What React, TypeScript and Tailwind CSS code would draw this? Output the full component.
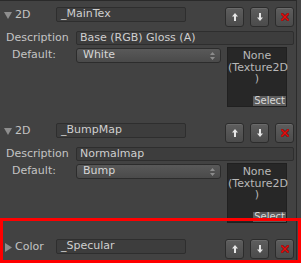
import React from 'react';

type Prop = {
  kind: string;
  name: string;
  expanded: boolean;
  description?: string;
  defaultValue?: string;
};

const props: Prop[] = [
  { kind: '2D', name: '_MainTex', expanded: true, description: 'Base (RGB) Gloss (A)', defaultValue: 'White' },
  { kind: '2D', name: '_BumpMap', expanded: true, description: 'Normalmap', defaultValue: 'Bump' },
  { kind: 'Color', name: '_Specular', expanded: false },
];

function ArrowIcon({ down }: { down?: boolean }) {
  return (
    <svg width="6" height="8" viewBox="0 0 6 8" className={down ? 'rotate-180' : ''}>
      <path d="M3 0 L6 3.5 L4 3.5 L4 8 L2 8 L2 3.5 L0 3.5 Z" fill="#e6e6e6" />
    </svg>
  );
}

function CrossIcon() {
  return (
    <svg width="8" height="8" viewBox="0 0 8 8">
      <path d="M1 1 L7 7 M7 1 L1 7" stroke="#5a1010" strokeWidth="2.6" strokeLinecap="square" />
      <path d="M1 1 L7 7 M7 1 L1 7" stroke="#e01010" strokeWidth="1.6" strokeLinecap="square" />
    </svg>
  );
}

function Foldout({ open }: { open: boolean }) {
  return (
    <svg width="9" height="9" viewBox="0 0 9 9" className="mr-[2px] shrink-0">
      {open ? <path d="M0 1 L8 1 L4 8 Z" fill="#8e8e8e" /> : <path d="M1 0 L8 4.5 L1 9 Z" fill="#8e8e8e" />}
    </svg>
  );
}

function SmallButton({ children }: { children: React.ReactNode }) {
  return (
    <button className="flex h-[20px] w-[19px] items-center justify-center rounded-[3px] border border-[#2c2c2c] bg-gradient-to-b from-[#5e5e5e] to-[#4b4b4b] shadow-[inset_0_1px_0_#6a6a6a]">
      {children}
    </button>
  );
}

function PropertyBlock({ p }: { p: Prop }) {
  return (
    <div className="flex flex-col pb-[16px]">
      {/* header */}
      <div className="flex h-[20px] items-start">
        <div className="flex w-[56px] items-center pl-[4px] pt-[1px] text-[11px] leading-[14px] text-[#c4c4c4]">
          <Foldout open={p.expanded} />
          <span>{p.kind}</span>
        </div>
        <div className="flex h-[15px] w-[130px] items-center rounded-[2px] border border-[#2e2e2e] bg-[#3d3d3d] pl-[4px] text-[11px] text-[#cfcfcf]">
          {p.name}
        </div>
        <div className="ml-auto mr-[2px] flex gap-[6px]">
          <SmallButton><ArrowIcon /></SmallButton>
          <SmallButton><ArrowIcon down /></SmallButton>
          <SmallButton><CrossIcon /></SmallButton>
        </div>
      </div>

      {p.expanded && (
        <>
          <div className="mt-[4px] flex h-[14px] items-center">
            <div className="w-[76px] pl-[6px] text-[11px] text-[#c4c4c4]">Description</div>
            <div className="mr-[2px] flex h-[14px] flex-1 items-center rounded-[2px] border border-[#2e2e2e] bg-[#3d3d3d] pl-[3px] text-[11px] text-[#cfcfcf]">
              {p.description}
            </div>
          </div>
          <div className="mt-[2px] flex">
            <div className="mt-[1px] flex h-[14px] items-center pt-[1px]">
              <div className="w-[76px] pl-[12px] text-[11px] text-[#c4c4c4]">Default:</div>
              <div className="flex h-[15px] w-[145px] items-center justify-between rounded-[3px] border border-[#2c2c2c] bg-gradient-to-b from-[#595959] to-[#4a4a4a] pl-[6px] pr-[5px] text-[11px] text-[#d6d6d6]">
                <span>{p.defaultValue}</span>
                <svg width="5" height="8" viewBox="0 0 5 8">
                  <path d="M2.5 0 L5 3 L0 3 Z M2.5 8 L5 5 L0 5 Z" fill="#8c8c8c" />
                </svg>
              </div>
            </div>
            <div className="ml-[6px] flex h-[60px] w-[60px] flex-col border border-[#202020] bg-[#272727]">
              <div className="flex-1 pt-[2px] text-center text-[11px] leading-[11.5px] text-[#b8b8b8]">
                None
                <br />
                (Texture2D
                <br />)
              </div>
              <div className="self-end bg-[#5c5c5c] px-[1px] text-[10px] leading-[10px] text-[#d8d8d8]">Select</div>
            </div>
          </div>
        </>
      )}
    </div>
  );
}

export default function App() {
  return (
    <div
      className="relative h-[263px] w-[301px] overflow-hidden bg-[#424242]"
      style={{ fontFamily: '"DejaVu Sans", "Liberation Sans", sans-serif' }}
    >
      <div className="flex h-full">
        <div className="w-[296px] border-t border-[#2a2a2a] pt-[6px]">
          {props.map((p) => (
            <PropertyBlock key={p.name} p={p} />
          ))}
        </div>
        <div className="w-px bg-[#2c2c2c]" />
        <div className="flex-1 bg-[#454545]" />
      </div>

      {/* highlight */}
      <div className="absolute left-0 right-0 top-[218px] h-[45px] border-[3px] border-[#ff0000]" />
    </div>
  );
}
